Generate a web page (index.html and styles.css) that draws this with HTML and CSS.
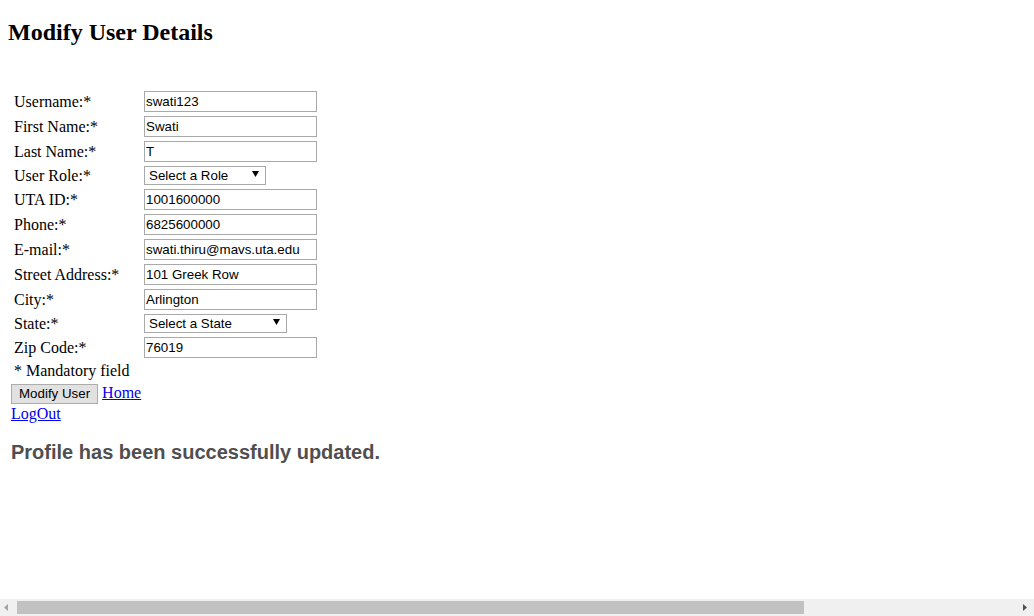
FILE: index.html
```html
<!DOCTYPE html>
<html>
<head>
<meta charset="utf-8">
<title>Modify User Details</title>
<link rel="stylesheet" href="styles.css">
</head>
<body>
<h2 class="title">Modify User Details</h2>
<form class="form">
  <table class="fields">
    <tr><td class="label">Username:*</td><td><input class="text" type="text" value="swati123"></td></tr>
    <tr><td class="label">First Name:*</td><td><input class="text" type="text" value="Swati"></td></tr>
    <tr><td class="label">Last Name:*</td><td><input class="text" type="text" value="T"></td></tr>
    <tr><td class="label">User Role:*</td><td><span class="sel sel-role"><select class="select"><option>Select a Role</option></select><svg class="arrow" width="7" height="6" viewBox="0 0 7 6"><path d="M0 0H7L3.5 6Z" fill="#000"/></svg></span></td></tr>
    <tr><td class="label">UTA ID:*</td><td><input class="text" type="text" value="1001600000"></td></tr>
    <tr><td class="label">Phone:*</td><td><input class="text" type="text" value="6825600000"></td></tr>
    <tr><td class="label">E-mail:*</td><td><input class="text" type="text" value="swati.thiru@mavs.uta.edu"></td></tr>
    <tr><td class="label">Street Address:*</td><td><input class="text" type="text" value="101 Greek Row"></td></tr>
    <tr><td class="label">City:*</td><td><input class="text" type="text" value="Arlington"></td></tr>
    <tr><td class="label">State:*</td><td><span class="sel sel-state"><select class="select"><option>Select a State</option></select><svg class="arrow" width="7" height="6" viewBox="0 0 7 6"><path d="M0 0H7L3.5 6Z" fill="#000"/></svg></span></td></tr>
    <tr><td class="label">Zip Code:*</td><td><input class="text" type="text" value="76019"></td></tr>
    <tr><td class="note" colspan="2">* Mandatory field</td></tr>
  </table>
  <div class="actions"><button class="btn" type="button">Modify User</button> <a class="link" href="#">Home</a><br><a class="link" href="#">LogOut</a></div>
</form>
<p class="message">Profile has been successfully updated.</p>
<div class="hscroll">
  <svg class="sb-left" width="4" height="7" viewBox="0 0 4 7"><path d="M4 0V7L0 3.5Z" fill="#a3a3a3"/></svg>
  <div class="sb-thumb"></div>
  <svg class="sb-right" width="4" height="7" viewBox="0 0 4 7"><path d="M0 0V7L4 3.5Z" fill="#505050"/></svg>
</div>
</body>
</html>
```
FILE: styles.css
```css
html, body {
  background: #fff;
}
body {
  margin: 8px;
  font-family: "Liberation Serif", "Times New Roman", serif;
  font-size: 16px;
  color: #000;
}
.title {
  font-size: 24px;
  font-weight: bold;
  margin: 11px 0 20px;
}
.form {
  margin: 0;
  padding: 22px 0 0 3px;
}
.fields {
  border-collapse: separate;
  border-spacing: 2px;
}
.fields td {
  padding: 1px;
  vertical-align: middle;
}
.label {
  width: 126px;
}
.text {
  box-sizing: border-box;
  width: 173px;
  height: 21px;
  margin: 0;
  border: 1px solid #a9a9a9;
  padding: 0 1px;
  font-family: "Liberation Sans", Arial, sans-serif;
  font-size: 13.333px;
  color: #000;
  background: #fff;
  display: block;
}
.sel {
  position: relative;
  display: block;
}
.select {
  -webkit-appearance: none;
  appearance: none;
  box-sizing: border-box;
  height: 19px;
  margin: 0;
  border: 1px solid #a9a9a9;
  border-radius: 0;
  padding: 0 0 0 4px;
  background: #fff;
  font-family: "Liberation Sans", Arial, sans-serif;
  font-size: 13.333px;
  color: #000;
  display: block;
}
.sel-role .select { width: 122px; }
.sel-state .select { width: 143px; }
.arrow {
  position: absolute;
  top: 5px;
}
.sel-role .arrow { left: 108px; }
.sel-state .arrow { left: 129px; }
.note {
  padding-left: 1px;
}
.actions {
  margin-top: 0;
  line-height: 19px;
}
.btn {
  box-sizing: border-box;
  height: 20px;
  margin: 0;
  padding: 0 7px;
  border: 1px solid #adadad;
  background: #e1e1e1;
  font-family: "Liberation Sans", Arial, sans-serif;
  font-size: 13.333px;
  color: #000;
  vertical-align: baseline;
}
.link {
  color: #0000ee;
  text-decoration: underline;
}
.message {
  margin: 18px 0 0 3px;
  font-family: "Liberation Sans", Arial, sans-serif;
  font-weight: bold;
  font-size: 20px;
  color: #4f4f4f;
}
.hscroll {
  position: fixed;
  left: 0;
  right: 0;
  bottom: 0;
  height: 17px;
  background: #f0f0f0;
}
.sb-thumb {
  position: absolute;
  left: 17px;
  top: 2px;
  width: 787px;
  height: 13px;
  background: #c1c1c1;
}
.sb-left {
  position: absolute;
  left: 4px;
  top: 5px;
}
.sb-right {
  position: absolute;
  right: 7px;
  top: 5px;
}
```
